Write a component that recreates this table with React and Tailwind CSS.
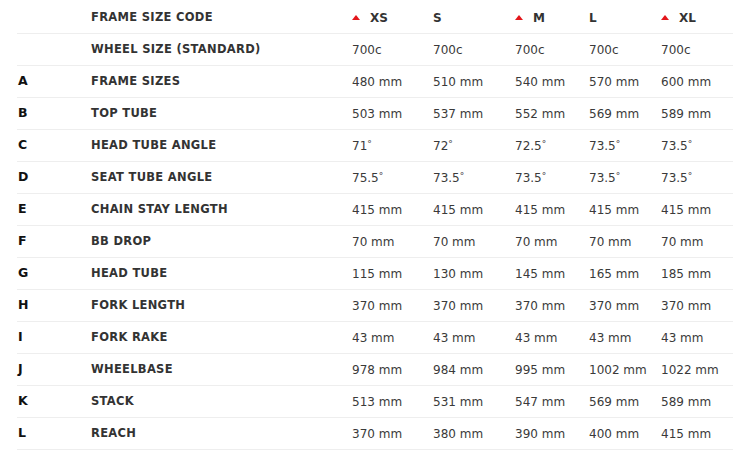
import React from 'react';

const sizes = [
  { code: 'XS', mark: true },
  { code: 'S', mark: false },
  { code: 'M', mark: true },
  { code: 'L', mark: false },
  { code: 'XL', mark: true },
];

const rows = [
  { letter: '', label: 'WHEEL SIZE (STANDARD)', values: ['700c', '700c', '700c', '700c', '700c'] },
  { letter: 'A', label: 'FRAME SIZES', values: ['480 mm', '510 mm', '540 mm', '570 mm', '600 mm'] },
  { letter: 'B', label: 'TOP TUBE', values: ['503 mm', '537 mm', '552 mm', '569 mm', '589 mm'] },
  { letter: 'C', label: 'HEAD TUBE ANGLE', values: ['71°', '72°', '72.5°', '73.5°', '73.5°'] },
  { letter: 'D', label: 'SEAT TUBE ANGLE', values: ['75.5°', '73.5°', '73.5°', '73.5°', '73.5°'] },
  { letter: 'E', label: 'CHAIN STAY LENGTH', values: ['415 mm', '415 mm', '415 mm', '415 mm', '415 mm'] },
  { letter: 'F', label: 'BB DROP', values: ['70 mm', '70 mm', '70 mm', '70 mm', '70 mm'] },
  { letter: 'G', label: 'HEAD TUBE', values: ['115 mm', '130 mm', '145 mm', '165 mm', '185 mm'] },
  { letter: 'H', label: 'FORK LENGTH', values: ['370 mm', '370 mm', '370 mm', '370 mm', '370 mm'] },
  { letter: 'I', label: 'FORK RAKE', values: ['43 mm', '43 mm', '43 mm', '43 mm', '43 mm'] },
  { letter: 'J', label: 'WHEELBASE', values: ['978 mm', '984 mm', '995 mm', '1002 mm', '1022 mm'] },
  { letter: 'K', label: 'STACK', values: ['513 mm', '531 mm', '547 mm', '569 mm', '589 mm'] },
  { letter: 'L', label: 'REACH', values: ['370 mm', '380 mm', '390 mm', '400 mm', '415 mm'] },
];

const cols = 'grid grid-cols-[74px_261px_81px_82px_74px_72px_72px] items-center h-8 border-b border-[#eeeeee]';

const Triangle = () => (
  <svg width="8" height="5" viewBox="0 0 8 5" className="mr-[10px] mb-[2px]">
    <polygon points="4,0 8,5 0,5" fill="#e3161b" />
  </svg>
);

// degree mark sits a little raised and small, like the source
const Val = ({ v }) => {
  if (v.endsWith('°')) {
    return (
      <span>
        {v.slice(0, -1)}
        <span className="relative -top-[3px] text-[9px]">°</span>
      </span>
    );
  }
  return v;
};

export default function App() {
  return (
    <div className="w-[750px] h-[450px] bg-white pt-[2px] font-['DejaVu_Sans',sans-serif] text-[#2b2b2b]">
      <div className="ml-[17px] w-[716px]">
        <div className={cols}>
          <div />
          <div className="pt-px text-[11.5px] font-bold tracking-[0.3px] text-[#333]">FRAME SIZE CODE</div>
          {sizes.map((s) => (
            <div key={s.code} className="flex items-center pt-px text-[12px] font-bold text-[#333]">
              {s.mark && <Triangle />}
              {s.code}
            </div>
          ))}
        </div>
        {rows.map((r) => (
          <div key={r.label} className={cols}>
            <div className="pl-px text-[12.5px] font-extrabold text-[#111]">{r.letter}</div>
            <div className="text-[11.5px] font-bold tracking-[0.3px] text-[#333]">{r.label}</div>
            {r.values.map((v, i) => (
              <div key={i} className="text-[12px] text-[#3a3a3a] whitespace-nowrap">
                <Val v={v} />
              </div>
            ))}
          </div>
        ))}
      </div>
    </div>
  );
}
